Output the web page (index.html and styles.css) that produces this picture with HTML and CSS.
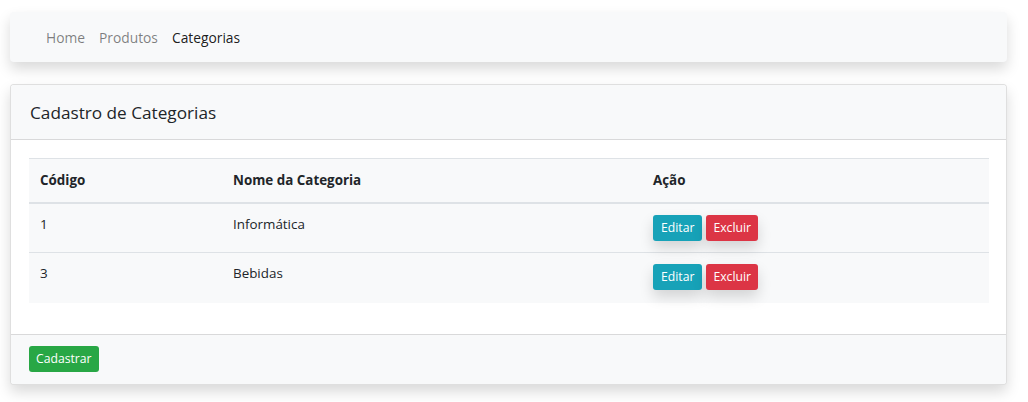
FILE: index.html
```html
<!DOCTYPE html>
<html lang="pt">
<head>
<meta charset="utf-8">
<title>Cadastro de Categorias</title>
<link rel="stylesheet" href="styles.css">
</head>
<body>
<div class="page">
  <nav class="navbar">
    <a class="nav-link">Home</a>
    <a class="nav-link">Produtos</a>
    <a class="nav-link active">Categorias</a>
  </nav>
  <section class="card">
    <header class="card-header">
      <h5 class="card-title">Cadastro de Categorias</h5>
    </header>
    <div class="card-body">
      <table class="table">
        <thead>
          <tr>
            <th class="col-code">Código</th>
            <th class="col-name">Nome da Categoria</th>
            <th class="col-action">Ação</th>
          </tr>
        </thead>
        <tbody>
          <tr>
            <td>1</td>
            <td>Informática</td>
            <td><div class="actions"><button class="btn btn-info">Editar</button><button class="btn btn-danger">Excluir</button></div></td>
          </tr>
          <tr>
            <td>3</td>
            <td>Bebidas</td>
            <td><div class="actions"><button class="btn btn-info">Editar</button><button class="btn btn-danger">Excluir</button></div></td>
          </tr>
        </tbody>
      </table>
    </div>
    <footer class="card-footer">
      <button class="btn btn-success">Cadastrar</button>
    </footer>
  </section>
</div>
</body>
</html>
```
FILE: styles.css
```css
* { box-sizing: border-box; }
html, body { margin: 0; padding: 0; background: #fff; }
body {
  font-family: "Open Sans", "Noto Sans", sans-serif;
  font-size: 13.4px;
  color: #212529;
}
.page {
  width: 997px;
  margin-left: 10px;
  padding: 12px 0 18px;
  display: flex;
  flex-direction: column;
  gap: 22px;
}
.navbar {
  height: 50px;
  background: #f8f9fa;
  border-radius: 4px;
  box-shadow: 0 7px 14px rgba(0,0,0,.15);
  display: flex;
  align-items: center;
  padding-left: 29px;
}
.nav-link {
  padding: 0 7px;
  color: rgba(0,0,0,.5);
  font-size: 13.8px;
  text-decoration: none;
}
.nav-link.active { color: rgba(0,0,0,.9); }
.card {
  border: 1px solid rgba(0,0,0,.125);
  border-radius: 4px;
  box-shadow: 0 7px 14px rgba(0,0,0,.15);
  background: #fff;
  overflow: hidden;
}
.card-header {
  height: 55px;
  background: #f8f9fa;
  border-bottom: 1px solid rgba(0,0,0,.125);
  display: flex;
  align-items: center;
  padding: 0 19px;
}
.card-title {
  margin: 0;
  font-size: 17.2px;
  font-weight: 500;
  color: #212529;
}
.card-body {
  padding: 18px 18px 31px;
}
.table {
  width: 960px;
  border-collapse: collapse;
  background: #f8f9fa;
}
.table th, .table td {
  text-align: left;
  padding: 0 11px;
}
.table th {
  height: 44px;
  font-weight: 700;
  vertical-align: middle;
  border-top: 1px solid #dee2e6;
  border-bottom: 2px solid #dee2e6;
}
.table td {
  height: 50px;
  padding-top: 11px;
  vertical-align: top;
  border-top: 1px solid #dee2e6;
}
.table tbody tr:first-child td { border-top: 0; }
.col-code { width: 193px; }
.col-name { width: 420px; }
.col-action { width: 347px; }
.actions { display: flex; gap: 4px; }
.btn {
  font-family: inherit;
  font-size: 12.2px;
  height: 26px;
  padding: 0 8px;
  border: 0;
  border-radius: 3px;
  color: #fff;
  line-height: 26px;
  cursor: pointer;
}
.btn-info { background: #17a2b8; box-shadow: 0 7px 14px rgba(0,0,0,.15); }
.btn-danger { background: #dc3545; padding: 0 7px; box-shadow: 0 7px 14px rgba(0,0,0,.15); }
.btn-success { background: #28a745; padding: 0 7px; }
.card-footer {
  height: 50px;
  background: #f8f9fa;
  border-top: 1px solid rgba(0,0,0,.125);
  display: flex;
  align-items: center;
  padding: 0 18px;
}
```
